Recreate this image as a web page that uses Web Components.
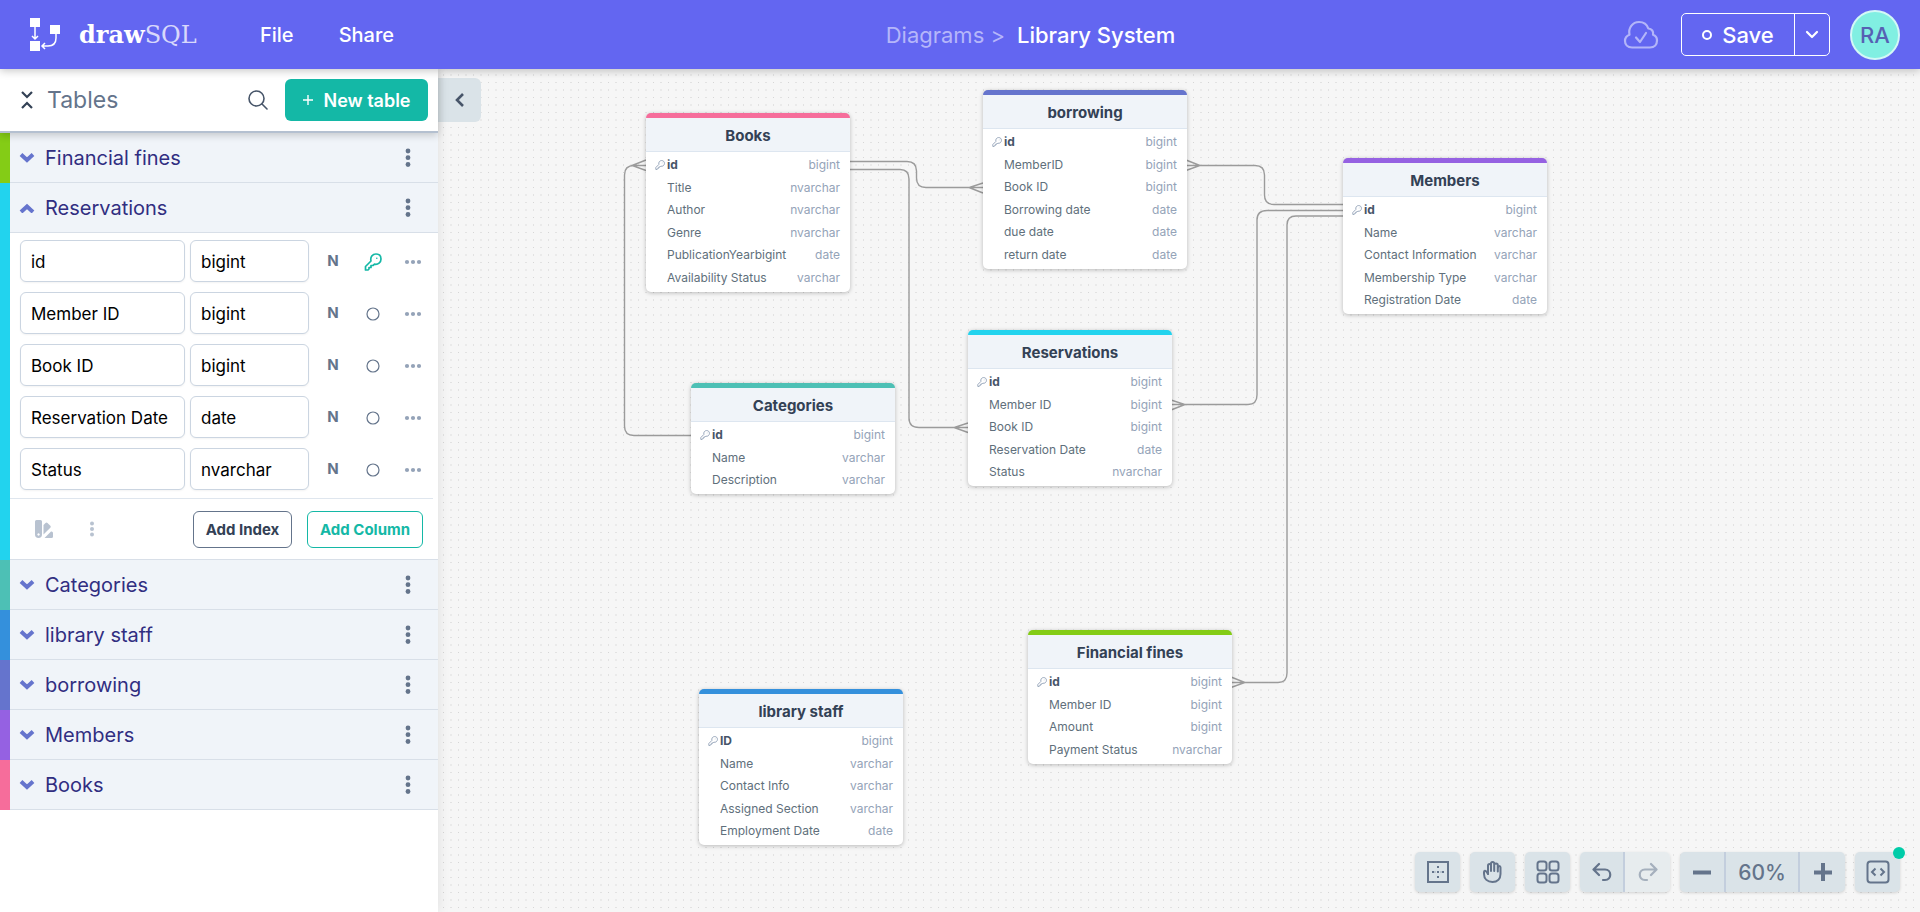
<!DOCTYPE html>
<html lang="en">
<head>
<meta charset="utf-8">
<title>Library System - drawSQL</title>
<style>
  html, body { height: 100%; margin: 0; }
  body { font-family: Inter, "Liberation Sans", sans-serif; overflow: hidden; }
</style>
</head>
<body>
<draw-app></draw-app>
<script>
const TABLES = [
  { name: 'Financial fines', color: '#84cc16', x: 590, y: 561, cols: [['id','bigint',1],['Member ID','bigint'],['Amount','bigint'],['Payment Status','nvarchar']] },
  { name: 'Reservations', color: '#22d3ee', x: 530, y: 261, open: true, cols: [['id','bigint',1],['Member ID','bigint'],['Book ID','bigint'],['Reservation Date','date'],['Status','nvarchar']] },
  { name: 'Categories', color: '#4dc0b5', x: 253, y: 314, cols: [['id','bigint',1],['Name','varchar'],['Description','varchar']] },
  { name: 'library staff', color: '#3490dc', x: 261, y: 620, cols: [['ID','bigint',1],['Name','varchar'],['Contact Info','varchar'],['Assigned Section','varchar'],['Employment Date','date']] },
  { name: 'borrowing', color: '#6574cd', x: 545, y: 21, cols: [['id','bigint',1],['MemberID','bigint'],['Book ID','bigint'],['Borrowing date','date'],['due date','date'],['return date','date']] },
  { name: 'Members', color: '#9561e2', x: 905, y: 89, cols: [['id','bigint',1],['Name','varchar'],['Contact Information','varchar'],['Membership Type','varchar'],['Registration Date','date']] },
  { name: 'Books', color: '#f66d9b', x: 208, y: 44, cols: [['id','bigint',1],['Title','nvarchar'],['Author','nvarchar'],['Genre','nvarchar'],['PublicationYearbigint','date'],['Availability Status','varchar']] }
];

const ICONS = {
  logo: ['0 0 30 33', '<path fill="currentColor" d="M0 0h10v9H0zM0 23h10v10H0zM20 7h10v9H20z"/><path fill="none" stroke="currentColor" stroke-width="1.5" d="M5 9v12M2 18l3 3 3-3M26 16v4q0 8-8 8h-6M15 25l-3 3 3 3"/>'],
  collapse: ['0 0 12 18', '<path fill="none" stroke="#334155" stroke-width="2.2" d="M1 1l5 5 5-5M1 17l5-5 5 5"/>'],
  search: ['0 0 20 20', '<g fill="none" stroke="#475569" stroke-width="1.6" stroke-linecap="round"><circle cx="8.5" cy="8.5" r="7.5"/><path d="M14 14l5 5"/></g>'],
  plus: ['0 0 12 12', '<path stroke="currentColor" stroke-width="1.4" d="M6 1v10M1 6h10"/>'],
  left: ['0 0 10 14', '<path fill="none" stroke="#475569" stroke-width="2.6" d="M8 1L2 7l6 6"/>'],
  down: ['0 0 16 10', '<path fill="none" stroke="#6574cd" stroke-width="4" d="M2 1.5l6 5.5 6-5.5"/>'],
  up: ['0 0 16 10', '<path fill="none" stroke="#6574cd" stroke-width="4" d="M2 9l6-5.5L14 9"/>'],
  caret: ['0 0 14 9', '<path fill="none" stroke="currentColor" stroke-width="2.2" stroke-linecap="round" stroke-linejoin="round" d="M2 2l5 5 5-5"/>'],
  dotsV: ['0 0 6 20', '<g fill="currentColor"><circle cx="3" cy="3" r="2.4"/><circle cx="3" cy="9.7" r="2.4"/><circle cx="3" cy="16.5" r="2.4"/></g>'],
  dotsVs: ['0 0 6 16', '<g fill="#b8c2d0"><circle cx="3" cy="2.5" r="2"/><circle cx="3" cy="8" r="2"/><circle cx="3" cy="13.5" r="2"/></g>'],
  dotsH: ['0 0 18 6', '<g fill="#94a3b8"><circle cx="3" cy="3" r="2.1"/><circle cx="9" cy="3" r="2.1"/><circle cx="15" cy="3" r="2.1"/></g>'],
  ring: ['0 0 14 14', '<circle cx="7" cy="7" r="6" fill="none" stroke="#64748b" stroke-width="1.2"/>'],
  key: ['0 0 18 18', '<g fill="none" stroke="currentColor" stroke-linejoin="round" stroke-width="1.7"><path d="M1.5 13.5L7 8C6 4 8.5 1 12 1c3 0 5 2 5 5 0 3.5-3 6-6.5 5.2L9 12.5H7V14.5H5V16L4 17H1.5z"/><circle cx="12.8" cy="5.2" r=".8" fill="currentColor" stroke="none"/></g>'],
  swatch: ['0 0 18 18', '<g fill="#b8c2d0"><path fill-rule="evenodd" d="M1.5 0H5.5q1.5 0 1.5 1.5V14.5a3.5 3.5 0 0 1-7 0V1.5Q0 0 1.5 0zM3.5 13.3a1.2 1.2 0 1 0 .1 0z"/><path d="M8.500 5L10.500 3q1-1 2 0l2.800 2.800q1 1 0 2L8.500 14.500z"/><path d="M9.500 18l6.500-6.500h.6q1.400 0 1.400 1.500v3.500q0 1.500-1.500 1.500z"/></g>'],
  cloud: ['0 0 36 30', '<g fill="none" stroke="#b3b5f9" stroke-width="2.2" stroke-linecap="round" stroke-linejoin="round"><path d="M9 27.5C4.5 27.5 2 24.5 2 21c0-3 2-5.300 4.500-6.200C5 8 9.500 2 16 2c4.500 0 8 2.500 9.300 6.500 3.500.2 5.500 3 4.700 6.300 2.500.8 4 3 4 5.700 0 4-2.500 7-7 7z"/><path d="M13 17.500l4 4.500 6-9"/></g>'],
  fit: ['0 0 22 22', '<path fill="none" stroke="currentColor" stroke-width="2" d="M1 1h20v20H1z"/><path fill="currentColor" d="M10 10h2v2h-2zM10 5h2v2h-2zM10 15h2v2h-2zM5 10h2v2H5zM15 10h2v2h-2zM7.5 10.5h1v1h-1zM13.5 10.5h1v1h-1z"/>'],
  hand: ['0 0 20 22', '<g fill="none" stroke="currentColor" stroke-width="2" stroke-linecap="round" stroke-linejoin="round"><path d="M5 13L3.5 10.8C2.5 9.2 1 9.5 1 11v2c0 5 3.5 8 8.5 8s8-3.3 8-8V6.5c0-2-2.5-2-2.5 0"/><path d="M5 13V4.5c0-2 3-2 3 0V10M8 4V2.5c0-2 3.200-2 3.200 0V10M11.200 4c0-2 3.600-2 3.600 0v6.500"/></g>'],
  grid: ['0 0 24 24', '<g fill="none" stroke="currentColor" stroke-width="2"><rect x="1.5" y="1.5" width="9" height="9" rx="2.5"/><rect x="13.5" y="1.5" width="9" height="9" rx="2.5"/><rect x="1.5" y="13.5" width="9" height="9" rx="2.5"/><rect x="13.5" y="13.5" width="9" height="9" rx="2.5"/></g>'],
  undo: ['0 0 20 20', '<path fill="none" stroke="currentColor" stroke-width="2.2" stroke-linecap="round" stroke-linejoin="round" d="M7 2L1.500 7.500l5.500 5.500M2 7.500h11c7 0 7 10.500 0 10.500h-2"/>'],
  redo: ['0 0 20 20', '<path fill="none" stroke="#64748b" stroke-opacity=".5" stroke-width="2.2" stroke-linecap="round" stroke-linejoin="round" d="M13 2l5.500 5.500L13 13M18 7.500H7C0 7.500 0 18 7 18h2"/>'],
  minus: ['0 0 18 18', '<path stroke="currentColor" stroke-width="4" d="M0 9.5h18"/>'],
  add: ['0 0 18 18', '<path stroke="currentColor" stroke-width="4" d="M0 9.5h18M9 0v18"/>'],
  code: ['0 0 24 24', '<g fill="none" stroke="currentColor" stroke-width="2"><rect x="1.5" y="1.5" width="21" height="21" rx="3"/><path d="M9.5 8.5L6 12l3.5 3.5M14.5 8.5L18 12l-3.5 3.5"/></g>']
};

const BASE = `*,*::before,*::after{box-sizing:border-box}
  button{font:inherit;color:inherit;border:0;background:none;padding:0;margin:0;display:flex;align-items:center;justify-content:center;cursor:pointer}
  a{color:inherit;text-decoration:none}`;

class Base extends HTMLElement {
  connectedCallback() {
    if (this.shadowRoot) return;
    this.attachShadow({ mode: 'open' }).innerHTML = `<style>${BASE}${this.css()}</style>${this.html()}`;
  }
  get model() { return TABLES[+this.getAttribute('index')]; }
  css() { return ''; }
  html() { return ''; }
}

customElements.define('ui-icon', class extends Base {
  css() { return ':host{display:inline-flex;flex:none}svg{display:block}'; }
  html() {
    const [box, body] = ICONS[this.getAttribute('name')];
    const [, , w, h] = box.split(' ');
    const size = +(this.getAttribute('size') || w);
    return `<svg aria-hidden="true" viewBox="${box}" width="${size}" height="${Math.round(size * h / w)}">${body}</svg>`;
  }
});

customElements.define('app-header', class extends Base {
  css() { return `
    :host{display:flex;align-items:center;height:69px;background:#6366f1;color:#fff;box-shadow:0 2px 8px rgba(0,0,0,.22);position:relative;z-index:3}
    .left{width:438px;display:flex;align-items:center;padding-left:30px;font-size:20px;font-weight:500}
    .brand{display:flex;align-items:center;gap:19px;width:230px;font:700 24px/32px "DejaVu Serif","Liberation Serif",serif}
    .brand span span{font-weight:200;opacity:.75}
    nav{display:flex;gap:45px}
    .crumbs{flex:1;display:flex;justify-content:center;gap:12px;font-size:22px}
    .crumbs a{color:#b5b6fa}.crumbs h1{margin:0;font-size:22px;font-weight:500}
    .right{display:flex;align-items:center;padding-right:20px;font-size:22px;font-weight:500}
    .save{display:flex;height:43px;border:1px solid #fff;border-radius:5px;margin:0 20px 0 22px}
    .save button:first-child{width:113px;gap:10px;border-right:1px solid #fff}
    .save button:last-child{width:34px}
    .o{width:10px;height:10px;border:2px solid #fff;border-radius:50%}
    .me{width:50px;height:50px;border-radius:50%;background:#81efe2;border:2px solid #d3f8f6;color:#5661b3}`; }
  html() { return `
    <div class="left"><a class="brand" href="#"><ui-icon name="logo"></ui-icon><span>draw<span>SQL</span></span></a>
      <nav><a href="#file">File</a><a href="#share">Share</a></nav></div>
    <div class="crumbs"><a href="#diagrams">Diagrams &gt;</a><h1>Library System</h1></div>
    <div class="right"><ui-icon name="cloud"></ui-icon>
      <div class="save"><button><i class="o"></i>Save</button><button aria-label="Save options"><ui-icon name="caret"></ui-icon></button></div>
      <button class="me">RA</button></div>`; }
});

customElements.define('column-row', class extends Base {
  css() { return `
    :host{display:flex;align-items:center;height:42px}
    input{height:42px;border:1px solid #cbd5e1;border-radius:6px;padding:2px 10px 0;font:17px/24px Inter,"Liberation Sans",sans-serif;color:#000;min-width:0;background:#fff;box-shadow:0 1px 2px rgba(0,0,0,.05)}
    .n{flex:1 1 0;margin-right:5px}.t{flex:none;width:119px}
    button{flex:none;width:40px;height:42px;padding-top:2px}
    .null{font-size:15px;font-weight:700;color:#64748b;margin-left:4px;height:40px;align-self:flex-start;padding:0}
    .k{color:#14b8a6}`; }
  html() {
    const g = a => this.getAttribute(a), pk = this.hasAttribute('pk');
    return `<input class="n" aria-label="Column name" value="${g('name')}"><input class="t" aria-label="Column type" value="${g('type')}">
    <button class="null" aria-label="Nullable">N</button><button class="k" aria-label="Index"><ui-icon name="${pk ? 'key' : 'ring'}"></ui-icon></button><button aria-label="More"><ui-icon name="dotsH"></ui-icon></button>`;
  }
});

customElements.define('table-section', class extends Base {
  css() { return `
    :host{display:block;border-left:10px solid ${this.model.color};background:#fff}
    header{display:flex;align-items:center;height:50px;background:#f0f4f9;border-bottom:1px solid #d8dfe8;padding:0 20px 0 9px}
    .title{flex:1;justify-content:flex-start;gap:10px;height:48px;font-size:20px;color:#312e81}
    .more{width:20px;height:40px;color:#64748b}
    .cols{display:grid;grid-template-columns:minmax(0,1fr);gap:10px;padding:7px 5px 8px 10px}
    footer{display:flex;align-items:center;height:61px;border-bottom:1px solid #d8dfe8;padding:0 15px 0 25px;font-size:15px;font-weight:700}
    hr{margin:0 5px 0 0;border:0;border-top:1px solid #dfe6ee}
    .gap{flex:1}
    footer .b{height:37px;border:1px solid #64748b;border-radius:6px;color:#334155;width:99px}
    footer .c{width:116px;margin-left:15px;border-color:#14b8a6;color:#14b8a6}
    .v{margin-left:36px}`; }
  html() {
    const t = this.model;
    return `<header><button class="title" aria-expanded="${!!t.open}"><ui-icon name="${t.open ? 'up' : 'down'}"></ui-icon>${t.name}</button><button class="more" aria-label="Table options"><ui-icon name="dotsV"></ui-icon></button></header>
    ${t.open ? `<div class="cols">${t.cols.map(c => `<column-row name="${c[0]}" type="${c[1]}" ${c[2] ? 'pk' : ''}></column-row>`).join('')}</div><hr>
    <footer><button aria-label="Colour"><ui-icon name="swatch"></ui-icon></button><button class="v" aria-label="More"><ui-icon name="dotsVs"></ui-icon></button><span class="gap"></span><button class="b">Add Index</button><button class="b c">Add Column</button></footer>` : ''}`;
  }
});

customElements.define('side-bar', class extends Base {
  css() { return `
    :host{display:block;background:#fff;box-shadow:0 0 12px rgba(0,0,0,.1);position:relative;z-index:2}
    .head{display:flex;align-items:center;height:64px;padding:0 10px 0 21px;border-bottom:2px solid #b4c0d0;box-shadow:0 2px 8px rgba(0,0,0,.2);position:relative;z-index:1}
    h2{margin:0 0 0 14px;flex:1;font-size:23px;font-weight:400;color:#64748b}
    .new{width:143px;height:42px;border-radius:6px;background:#14b8a6;color:#fff;font-size:18px;font-weight:600;gap:9px;margin-left:17px}`; }
  html() { return `<div class="head"><button aria-label="Collapse all"><ui-icon name="collapse"></ui-icon></button><h2>Tables</h2>
    <button aria-label="Search"><ui-icon name="search"></ui-icon></button><button class="new"><ui-icon name="plus"></ui-icon>New table</button></div>
    ${TABLES.map((t, i) => `<table-section index="${i}"></table-section>`).join('')}`; }
});

customElements.define('table-node', class extends Base {
  css() { const t = this.model; return `
    :host{display:block;position:absolute;left:${t.x}px;top:${t.y}px;width:204px;border-top:5px solid ${t.color};border-radius:5px;background:#fff;box-shadow:0 1px 4px rgba(0,0,0,.25);padding-bottom:3px}
    table{border-collapse:separate;border-spacing:0;width:100%}
    caption{height:34px;padding-top:3px;line-height:30px;font-size:15px;font-weight:700;color:#334155;background:#f0f4f9;border-bottom:1px solid #dde6f0;margin-bottom:2px}
    td,th{height:22px;padding:0;font-size:12px;line-height:16px;font-weight:400;text-align:left;color:#606f7b;white-space:nowrap}
    tr:nth-child(even)>*{height:23px}
    td:last-child{text-align:right;color:#94a3b8;padding-right:10px}
    th{padding-left:21px}
    .pk{font-weight:700;color:#475569;padding-left:9px}
    .pk div{display:flex;align-items:center;gap:2px}
    ui-icon{color:#94a3b8}`; }
  html() { const t = this.model; return `<table><caption>${t.name}</caption><tbody>${t.cols.map(c =>
    `<tr><th scope="row" class="${c[2] ? 'pk' : ''}">${c[2] ? `<div><ui-icon name="key" size="10"></ui-icon>${c[0]}</div>` : c[0]}</th><td>${c[1]}</td></tr>`).join('')}</tbody></table>`; }
});

customElements.define('tool-bar', class extends Base {
  css() { return `
    :host{display:flex;gap:10px;position:absolute;right:20px;bottom:20px;color:#64748b}
    .g{display:flex;position:relative;height:40px;border-radius:5px;background:#dae3e8;box-shadow:0 1px 3px rgba(0,0,0,.15)}
    button{width:45px}
    .g.h{background:linear-gradient(90deg,#dae3e8 50%,#e7ecee 50%)}
    .g button:not(:last-child),.g output{border-right:2px solid #c3cedd}
    .g output{width:74px;display:flex;align-items:center;justify-content:center;font-size:21px;font-weight:500}
    .z button:first-child{width:46px}
    .dot::after{content:"";position:absolute;right:-5px;top:-5px;width:12px;height:12px;border-radius:50%;background:#00cca8}`; }
  html() {
    const b = (n, l) => `<button aria-label="${l}"><ui-icon name="${n}"></ui-icon></button>`;
    return `<div class="g">${b('fit', 'Fit')}</div><div class="g">${b('hand', 'Pan')}</div><div class="g">${b('grid', 'Arrange')}</div>
    <div class="g h">${b('undo', 'Undo')}${b('redo', 'Redo')}</div><div class="g z">${b('minus', 'Zoom out')}<output>60%</output>${b('add', 'Zoom in')}</div><div class="g dot">${b('code', 'Code')}</div>`;
  }
});

customElements.define('diagram-canvas', class extends Base {
  css() { return `
    :host{display:block;position:relative;background:#f6f6f6;overflow:hidden}
    svg{display:block;width:100%;height:100%}
    .fold{position:absolute;left:0;top:9px;width:43px;height:44px;border-radius:0 6px 6px 0;background:#dae3e8;z-index:1}`; }
  html() { return `
    <svg aria-hidden="true"><defs><pattern id="dots" width="15" height="15" patternUnits="userSpaceOnUse" x="5" y="13"><g fill="#d6d6d6"><path d="M0 0h1v1H0z"/><path fill-opacity=".6" d="M7 0h2v1H7zM0 7h1v2H0z"/><path fill-opacity=".4" d="M7 7h2v2H7z"/></g></pattern></defs>
    <rect width="100%" height="100%" fill="url(#dots)"/>
    <g transform="translate(-438 -69)" fill="none" stroke="#9b9b9b" stroke-width="1.4">
      <path d="M646 165.500H634Q624.500 165.500 624.500 175V426Q624.500 435.500 634 435.500H691M646 160l-14 5.500 14 5"/>
      <path d="M849 161.500H907Q916.500 161.500 916.500 171V178Q916.500 187.500 926 187.500H983M983 183l-14 4.500 14 5.500"/>
      <path d="M849 169.500H900Q909 169.500 909 179V418Q909 427.500 919 427.500H968M968 423l-14 4.500 14 5"/>
      <path d="M1186 165.500H1255Q1264.500 165.500 1264.500 175V195Q1264.500 204.500 1274 204.500H1343M1186 160l14 5.500-14 5"/>
      <path d="M1171 404.500H1248Q1257 404.500 1257 395V220Q1257 210.500 1267 210.500H1343M1171 400l14 4.500-14 5.500"/>
      <path d="M1231 682.500H1278Q1287 682.500 1287 673V225Q1287 216 1296 216H1343M1231 677l14 5.500-14 5"/>
    </g></svg>
    ${TABLES.map((t, i) => `<table-node index="${i}"></table-node>`).join('')}
    <button class="fold" aria-label="Hide sidebar"><ui-icon name="left"></ui-icon></button>
    <tool-bar></tool-bar>`; }
});

customElements.define('draw-app', class extends Base {
  css() { return `
    :host{display:grid;grid-template:auto minmax(0,1fr) / 438px minmax(0,1fr);height:100vh}
    app-header{grid-column:1 / -1}`; }
  html() { return '<app-header></app-header><side-bar></side-bar><diagram-canvas></diagram-canvas>'; }
});
</script>
</body>
</html>
